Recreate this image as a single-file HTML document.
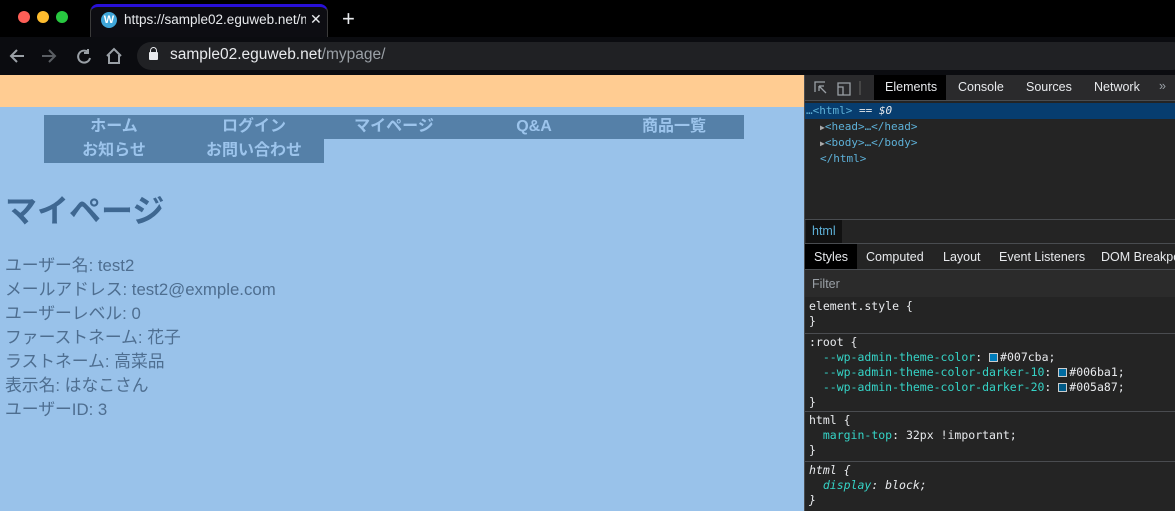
<!DOCTYPE html>
<html><head><meta charset="utf-8"><style>
*{margin:0;padding:0;box-sizing:border-box}
body{width:1175px;height:511px;overflow:hidden;background:#000;font-family:"Liberation Sans","Noto Sans CJK JP",sans-serif;position:relative}
.abs{position:absolute;white-space:nowrap}
.mono{font-family:"DejaVu Sans Mono","Liberation Mono",monospace}
.nav div{position:absolute;width:140px;height:24px;line-height:24px;text-align:center;color:#9cc4ec;font-weight:bold;font-size:16px}
.info div{height:24px;line-height:24px;font-size:16.8px;color:#4e6e90}
.dt{color:#e8eaed;font-size:12.5px}
.sec{position:absolute;left:805px;width:370px;border-top:1px solid #4a4c50;font-size:11.5px;color:#e8eaed}
.sec div{height:15px;line-height:15px;padding-left:4px;white-space:nowrap}
.p{color:#35d4c7}
.sw{display:inline-block;width:9px;height:9px;border:1px solid #ccc;vertical-align:-1px;margin-right:2px}
</style></head><body>
<div class="abs" style="left:18px;top:11px;width:12px;height:12px;border-radius:50%;background:#fe5f57"></div>
<div class="abs" style="left:37px;top:11px;width:12px;height:12px;border-radius:50%;background:#febc2e"></div>
<div class="abs" style="left:56px;top:11px;width:12px;height:12px;border-radius:50%;background:#28c840"></div>
<div class="abs" style="left:90px;top:4px;width:238px;height:34px;background:#0d0d12;border:1px solid #3a3a3a;border-bottom:none;border-radius:8px 8px 0 0;border-top:3px solid #2810d8"></div>
<div class="abs" style="left:101px;top:12px;width:16px;height:16px;border-radius:50%;background:#3fa6d9;color:#fff;font-size:11px;font-weight:bold;text-align:center;line-height:16px">W</div>
<div class="abs" style="left:124px;top:12px;width:182px;overflow:hidden;color:#e8eaed;font-size:13.5px">https://sample02.eguweb.net/m</div>
<div class="abs" style="left:310px;top:11px;color:#e8eaed;font-size:14px">✕</div>
<div class="abs" style="left:342px;top:6px;color:#e8eaed;font-size:22px">+</div>
<div class="abs" style="left:0;top:37px;width:1175px;height:38px;background:#0b0c10"></div>
<svg class="abs" style="left:8px;top:46px" width="120" height="20" fill="none" stroke-width="2">
<path d="M16 10H3M9 4L3 10L9 16" stroke="#9aa0a6"/>
<path d="M34 10H47M41 4L47 10L41 16" stroke="#5a5e63"/>
<path d="M80 6A6 6 0 1 0 82 12M80 3V7H76" stroke="#9aa0a6"/>
<path d="M99 10L106 3L113 10M101 9V17H111V9" stroke="#9aa0a6"/>
</svg>
<div class="abs" style="left:137px;top:42px;width:1050px;height:28px;border-radius:14px;background:#202124"></div>
<div class="abs" style="left:149px;top:52px;width:9px;height:8px;background:#e8eaed;border-radius:1px"></div>
<div class="abs" style="left:150px;top:47px;width:7px;height:7px;border:1.5px solid #e8eaed;border-bottom:none;border-radius:4px 4px 0 0"></div>
<div class="abs" style="left:170px;top:46px;color:#e8eaed;font-size:15.5px">sample02.eguweb.net<span style="color:#9aa0a6">/mypage/</span></div>
<div class="abs" style="left:0;top:75px;width:804px;height:436px;background:#99c2ea"></div>
<div class="abs" style="left:0;top:75px;width:804px;height:32px;background:#ffcc92"></div>
<div class="abs" style="left:44px;top:115px;width:700px;height:24px;background:#5580a8"></div>
<div class="abs" style="left:44px;top:139px;width:280px;height:24px;background:#5580a8"></div>
<div class="nav">
<div style="left:44px;top:115px">ホーム</div>
<div style="left:184px;top:115px">ログイン</div>
<div style="left:324px;top:115px">マイページ</div>
<div style="left:464px;top:115px">Q&amp;A</div>
<div style="left:604px;top:115px">商品一覧</div>
<div style="left:44px;top:139px">お知らせ</div>
<div style="left:184px;top:139px">お問い合わせ</div>
</div>
<div class="abs" style="left:5px;top:186px;font-size:32px;font-weight:bold;color:#3e6791">マイページ</div>
<div class="abs info" style="left:5px;top:254px">
<div>ユーザー名: test2</div><div>メールアドレス: test2@exmple.com</div><div>ユーザーレベル: 0</div><div>ファーストネーム: 花子</div><div>ラストネーム: 高菜品</div><div>表示名: はなこさん</div><div>ユーザーID: 3</div>
</div>
<div class="abs" style="left:804px;top:75px;width:371px;height:436px;background:#242424;border-left:1px solid #494c50"></div>
<div class="abs" style="left:805px;top:75px;width:370px;height:26px;background:#2a2a2c;border-bottom:1px solid #494c50"></div>
<svg class="abs" style="left:812px;top:79px" width="50" height="18" fill="none" stroke="#9aa0a6" stroke-width="1.3"><path d="M3 13V3H13M7 7L14 14M7 7V12M7 7H12"/><path d="M26 4H38V16H26ZM26 8H31V16"/><path d="M48 2V16" stroke="#555"/></svg>
<div class="abs" style="left:874px;top:75px;width:72px;height:25px;background:#000"></div>
<div class="abs dt" style="left:885px;top:80px">Elements</div>
<div class="abs dt" style="left:958px;top:80px">Console</div>
<div class="abs dt" style="left:1026px;top:80px">Sources</div>
<div class="abs dt" style="left:1094px;top:80px">Network</div>
<div class="abs dt" style="left:1159px;top:79px;color:#9aa0a6">»</div>
<div class="abs" style="left:805px;top:103px;width:370px;height:16px;background:#073d6f"></div>
<div class="abs mono" style="left:806px;top:103px;font-size:11px;line-height:16px;color:#5db0d7">…&lt;html&gt; <span style="color:#e8eaed">== <i>$0</i></span></div>
<div class="abs mono" style="left:820px;top:119px;font-size:11px;line-height:15px;color:#5db0d7"><span style="color:#aaa;font-size:8px">▶</span>&lt;head&gt;…&lt;/head&gt;<br><span style="color:#aaa;font-size:8px">▶</span>&lt;body&gt;…&lt;/body&gt;<br>&lt;/html&gt;</div>
<div class="abs" style="left:805px;top:219px;width:370px;border-top:1px solid #494c50"></div>
<div class="abs" style="left:806px;top:220px;width:36px;height:23px;background:#111"></div>
<div class="abs dt" style="left:812px;top:224px;color:#5db0d7">html</div>
<div class="abs" style="left:805px;top:243px;width:370px;border-top:1px solid #494c50"></div>
<div class="abs" style="left:805px;top:244px;width:52px;height:25px;background:#000"></div>
<div class="abs dt" style="left:814px;top:250px">Styles</div>
<div class="abs dt" style="left:866px;top:250px">Computed</div>
<div class="abs dt" style="left:943px;top:250px">Layout</div>
<div class="abs dt" style="left:999px;top:250px">Event Listeners</div>
<div class="abs dt" style="left:1101px;top:250px">DOM Breakpoints</div>
<div class="abs" style="left:805px;top:269px;width:370px;height:28px;border-top:1px solid #494c50;background:#2b2b2b"></div>
<div class="abs dt" style="left:812px;top:277px;color:#9aa0a6">Filter</div>
<div class="sec mono" style="top:298px;border-top:none;padding-top:1px"><div>element.style {</div><div>}</div></div>
<div class="sec mono" style="top:333px;padding-top:1px"><div>:root {</div>
<div>&nbsp;&nbsp;<span class="p">--wp-admin-theme-color</span>: <span class="sw" style="background:#007cba"></span>#007cba;</div>
<div>&nbsp;&nbsp;<span class="p">--wp-admin-theme-color-darker-10</span>: <span class="sw" style="background:#006ba1"></span>#006ba1;</div>
<div>&nbsp;&nbsp;<span class="p">--wp-admin-theme-color-darker-20</span>: <span class="sw" style="background:#005a87"></span>#005a87;</div><div>}</div></div>
<div class="sec mono" style="top:411px;padding-top:1px"><div>html {</div><div>&nbsp;&nbsp;<span class="p">margin-top</span>: 32px !important;</div><div>}</div></div>
<div class="sec mono" style="top:461px;padding-top:1px;font-style:italic"><div>html {</div><div>&nbsp;&nbsp;<span class="p">display</span>: block;</div><div>}</div></div>
</body></html>
